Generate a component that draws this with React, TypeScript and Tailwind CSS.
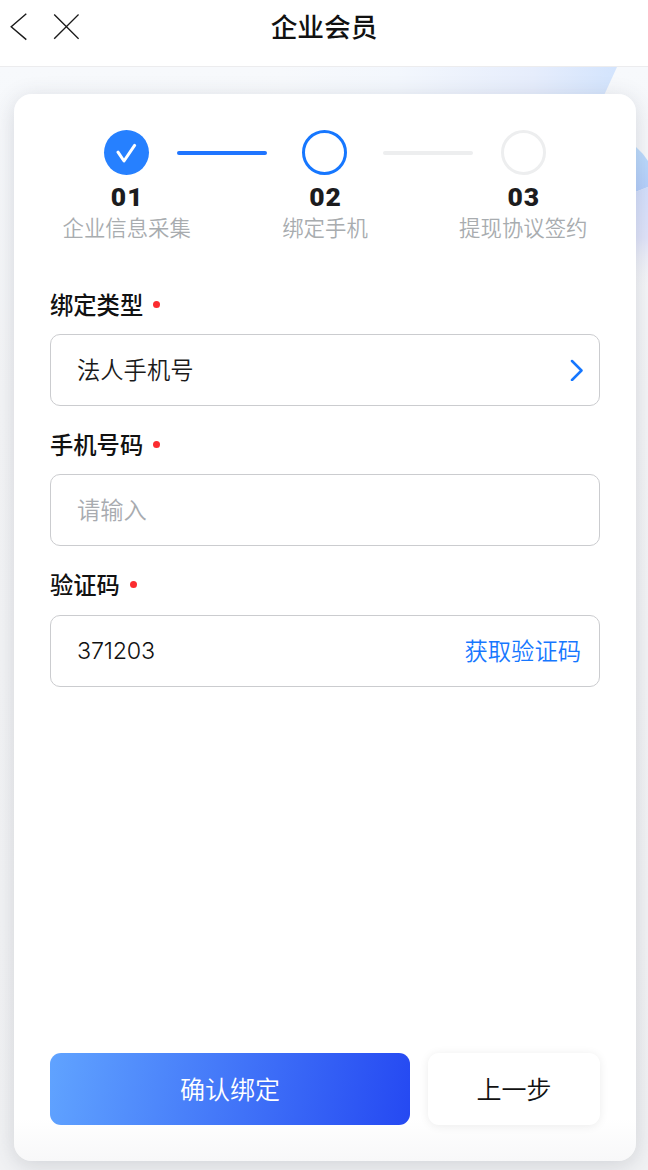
import { useState } from "react";
import type { ReactNode } from "react";

type StepState = "done" | "current" | "todo";

const steps: { no: string; label: string; state: StepState }[] = [
  { no: "01", label: "企业信息采集", state: "done" },
  { no: "02", label: "绑定手机", state: "current" },
  { no: "03", label: "提现协议签约", state: "todo" },
];

const circleStyles: Record<StepState, string> = {
  done: "bg-[#2680ff]",
  current: "border-[3.5px] border-[#1677ff]",
  todo: "border-[3.5px] border-[#edeeef]",
};

function Backdrop() {
  return (
    <svg
      className="absolute inset-0 h-full w-full"
      viewBox="0 0 648 1103"
      preserveAspectRatio="none"
    >
      <defs>
        <linearGradient id="page" x1="0" y1="0" x2="0" y2="1">
          <stop offset="0" stopColor="#f7f9fc" />
          <stop offset="0.3" stopColor="#f4f5f7" />
          <stop offset="1" stopColor="#f1f2f4" />
        </linearGradient>
        <linearGradient id="beam" x1="0" y1="0" x2="1" y2="0">
          <stop offset="0" stopColor="#f7f9fc" />
          <stop offset="0.35" stopColor="#f3f7fd" />
          <stop offset="0.75" stopColor="#e6edfc" />
          <stop offset="1" stopColor="#d3e4fd" />
        </linearGradient>
        <linearGradient id="ball" x1="0" y1="0" x2="0" y2="1">
          <stop offset="0" stopColor="#bfe0fd" />
          <stop offset="1" stopColor="#b3ccfb" />
        </linearGradient>
        <linearGradient id="tail" x1="0" y1="0" x2="0" y2="1">
          <stop offset="0" stopColor="#d3dffc" />
          <stop offset="0.5" stopColor="#e0e4fa" />
          <stop offset="1" stopColor="#f3f4f7" stopOpacity="0" />
        </linearGradient>
      </defs>
      <rect width="648" height="1103" fill="url(#page)" />
      <path d="M280 0H617L595 48H280Z" fill="url(#beam)" />
      <path d="M620 70Q638 78 648 94V120L620 131Z" fill="url(#ball)" />
      <path d="M620 131L648 120V222H620Z" fill="url(#tail)" />
    </svg>
  );
}

function Header() {
  return (
    <header className="relative flex h-[67px] items-start border-b border-[#ececee] bg-white">
      <div className="flex items-center gap-[26px] pt-[13px] pl-[10px] text-[#1a1a1a]">
        <svg width="17" height="28" viewBox="0 0 17 28" fill="none" stroke="currentColor" strokeWidth="1.4">
          <path d="M16.3 .7L1.2 13.7L16.3 26.6" />
        </svg>
        <svg width="26" height="28" viewBox="0 0 26 28" fill="none" stroke="currentColor" strokeWidth="1.4">
          <path d="M1.2 1.5L25.6 25.8M25.6 1.5L1.2 25.8" />
        </svg>
      </div>
      <h1 className="absolute inset-x-0 top-[6px] text-center text-[26.7px] leading-[40px] font-medium text-[#111]">
        企业会员
      </h1>
    </header>
  );
}

function Step({ no, label, state }: { no: string; label: string; state: StepState }) {
  return (
    <li className="flex w-[198.3px] flex-col items-center">
      <div className={`flex size-[45px] items-center justify-center rounded-full ${circleStyles[state]}`}>
        {state === "done" && (
          <svg width="21" height="20" viewBox="0 0 21 20" fill="none" stroke="#fff" strokeWidth="3">
            <path d="M2 9.2L8 18L18.6 2.4" strokeLinecap="round" strokeLinejoin="round" />
          </svg>
        )}
      </div>
      <span className="mt-[7px] pl-px font-['Roboto'] text-[26.5px] leading-[30px] font-black tracking-[1px] text-[#1c1c1e]">
        {no}
      </span>
      <span className="text-[21.4px] leading-[30px] font-[350] text-[#a8acaf]">{label}</span>
    </li>
  );
}

function Steps() {
  return (
    <div className="relative -mx-[23px]">
      <ol className="flex justify-center">
        {steps.map((s) => (
          <Step key={s.no} {...s} />
        ))}
      </ol>
      {/* connectors sit between the circles */}
      <i className="absolute top-[21px] left-[150px] h-[3.5px] w-[90px] rounded-full bg-[#1f75ff]" />
      <i className="absolute top-[21px] left-[356px] h-[3.5px] w-[90px] rounded-full bg-[#edeeef]" />
    </div>
  );
}

function Field({ label, children }: { label: string; children: ReactNode }) {
  return (
    <div className="mb-[18.4px]">
      <div className="flex h-[50px] items-center gap-[10px] pb-[10px] text-[23.3px] font-medium text-[#111]">
        {label}
        <span className="size-[7px] rounded-full bg-[#fb2c2f]" />
      </div>
      <div className="flex h-[72px] items-center justify-between rounded-[10px] border border-[#cbcccf] pr-[18px] pb-px pl-[26px] text-[23.3px] font-[350]">
        {children}
      </div>
    </div>
  );
}

export default function App() {
  const [phone, setPhone] = useState("");
  const [code, setCode] = useState("371203");

  return (
    <div className="flex h-[1170px] w-[648px] flex-col overflow-hidden bg-white font-['Noto_Sans_CJK_SC',sans-serif]">
      <Header />
      <main className="relative flex flex-1 pt-[27px] pr-[12px] pb-[9px] pl-[14px]">
        <Backdrop />
        <section className="relative flex min-w-0 flex-1 flex-col rounded-[18px] bg-gradient-to-b from-white from-96% to-[#f8f8f9] px-9 pt-9 pb-9 shadow-[0_4px_22px_rgba(60,65,85,0.18)]">
          <Steps />

          <form className="mt-[42px] flex flex-1 flex-col" onSubmit={(e) => e.preventDefault()}>
            <Field label="绑定类型">
              <span className="text-[#1a1a1a]">法人手机号</span>
              <svg width="14" height="22" viewBox="0 0 14 22" fill="none" stroke="#1677ff" strokeWidth="2.5" className="-mr-[3px]">
                <path d="M2 2L11.5 11.5L2 21" strokeLinecap="round" strokeLinejoin="round" />
              </svg>
            </Field>

            <Field label="手机号码">
              <input
                className="w-full bg-transparent outline-none placeholder:text-[#a8abb0]"
                placeholder="请输入"
                value={phone}
                onChange={(e) => setPhone(e.target.value)}
              />
            </Field>

            <Field label="验证码">
              <input
                className="w-[200px] bg-transparent pt-[2px] font-['Inter'] text-[23.3px] font-light tracking-[-0.2px] text-[#111] outline-none"
                value={code}
                onChange={(e) => setCode(e.target.value)}
              />
              <button type="button" className="text-[#1677ff]">
                获取验证码
              </button>
            </Field>

            <div className="mt-auto flex gap-[18px]">
              <button className="h-[72px] w-[360px] rounded-[11px] bg-linear-[98deg] from-[#60a3ff] to-[#2549f2] text-[25px] font-[350] text-white">
                确认绑定
              </button>
              <button
                type="button"
                className="h-[72px] flex-1 rounded-[11px] bg-white text-[25px] font-[350] text-[#111] shadow-[0_1px_10px_rgba(0,0,0,0.08)]"
              >
                上一步
              </button>
            </div>
          </form>
        </section>
      </main>
    </div>
  );
}
